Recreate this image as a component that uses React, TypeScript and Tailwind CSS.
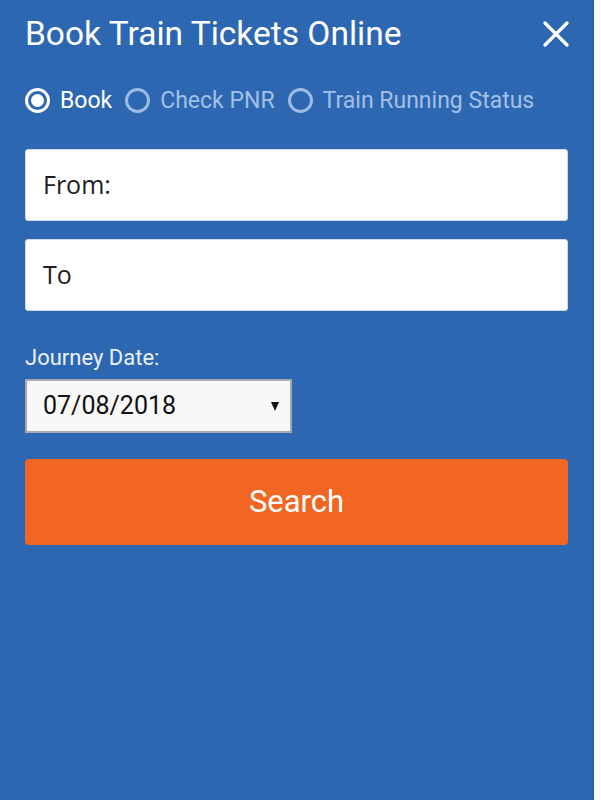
import React, { useState } from "react";

const tabs = ["Book", "Check PNR", "Train Running Status"];

const Radio = ({ label, active, onClick }: { label: string; active: boolean; onClick: () => void }) => (
  <button onClick={onClick} className="flex items-center gap-[10px] mr-[13px]">
    {active ? (
      <span className="w-[25px] h-[25px] rounded-full border-[3px] border-white flex items-center justify-center">
        <span className="w-[13px] h-[13px] rounded-full bg-white"></span>
      </span>
    ) : (
      <span className="w-[25px] h-[25px] rounded-full border-[3px] border-[#9dbbe4]"></span>
    )}
    <span
      className={
        "text-[23px] leading-[25px] font-['Roboto',sans-serif] " +
        (active ? "text-white" : "text-[#a3c0e6]")
      }
    >
      {label}
    </span>
  </button>
);

const App = () => {
  const [tab, setTab] = useState(0);

  return (
    <div className="flex w-[601px] h-[800px] bg-white">
      <div className="w-[594px] h-full bg-[#2d67b1] border-r border-[#235a9e] px-[25px] font-['Roboto',sans-serif]">
        <div className="flex items-center justify-between pt-[14px]">
          <h1 className="text-white text-[33.5px] leading-[40px]">Book Train Tickets Online</h1>
          <svg width="26" height="26" viewBox="0 0 26 26" className="mr-[-1px]">
            <path d="M2 2 L24 24 M24 2 L2 24" stroke="white" strokeWidth="3.2" strokeLinecap="round" />
          </svg>
        </div>

        <div className="flex items-center mt-[34px]">
          {tabs.map((t, i) => (
            <Radio key={t} label={t} active={tab === i} onClick={() => setTab(i)} />
          ))}
        </div>

        <div className="mt-[36px] h-[72px] bg-white rounded-[3px] border border-[#cfd8e4] flex items-center pl-[17px]">
          <span className="text-[25px] text-[#1c1c1c] font-['Open_Sans',sans-serif]">From:</span>
        </div>
        <div className="mt-[18px] h-[72px] bg-white rounded-[3px] border border-[#cfd8e4] flex items-center pl-[17px]">
          <span className="text-[25px] text-[#1c1c1c] font-['Open_Sans',sans-serif]">To</span>
        </div>

        <div className="mt-[35px] text-[22px] leading-[24px] text-[#eaf1fa]">Journey Date:</div>
        <div className="mt-[9px] w-[267px] h-[54px] bg-[#f8f8f8] border-2 border-[#a6a9ad] flex items-center justify-between pl-[16px] pr-[11px]">
          <span className="text-[25px] text-[#111]">07/08/2018</span>
          <svg width="8" height="10" viewBox="0 0 8 10">
            <polygon points="0,1 8,1 4,10" fill="#111" />
          </svg>
        </div>

        <button className="mt-[26px] w-full h-[86px] bg-[#f06622] rounded-[4px] text-white text-[31px]">
          Search
        </button>
      </div>
    </div>
  );
};

export default App;
